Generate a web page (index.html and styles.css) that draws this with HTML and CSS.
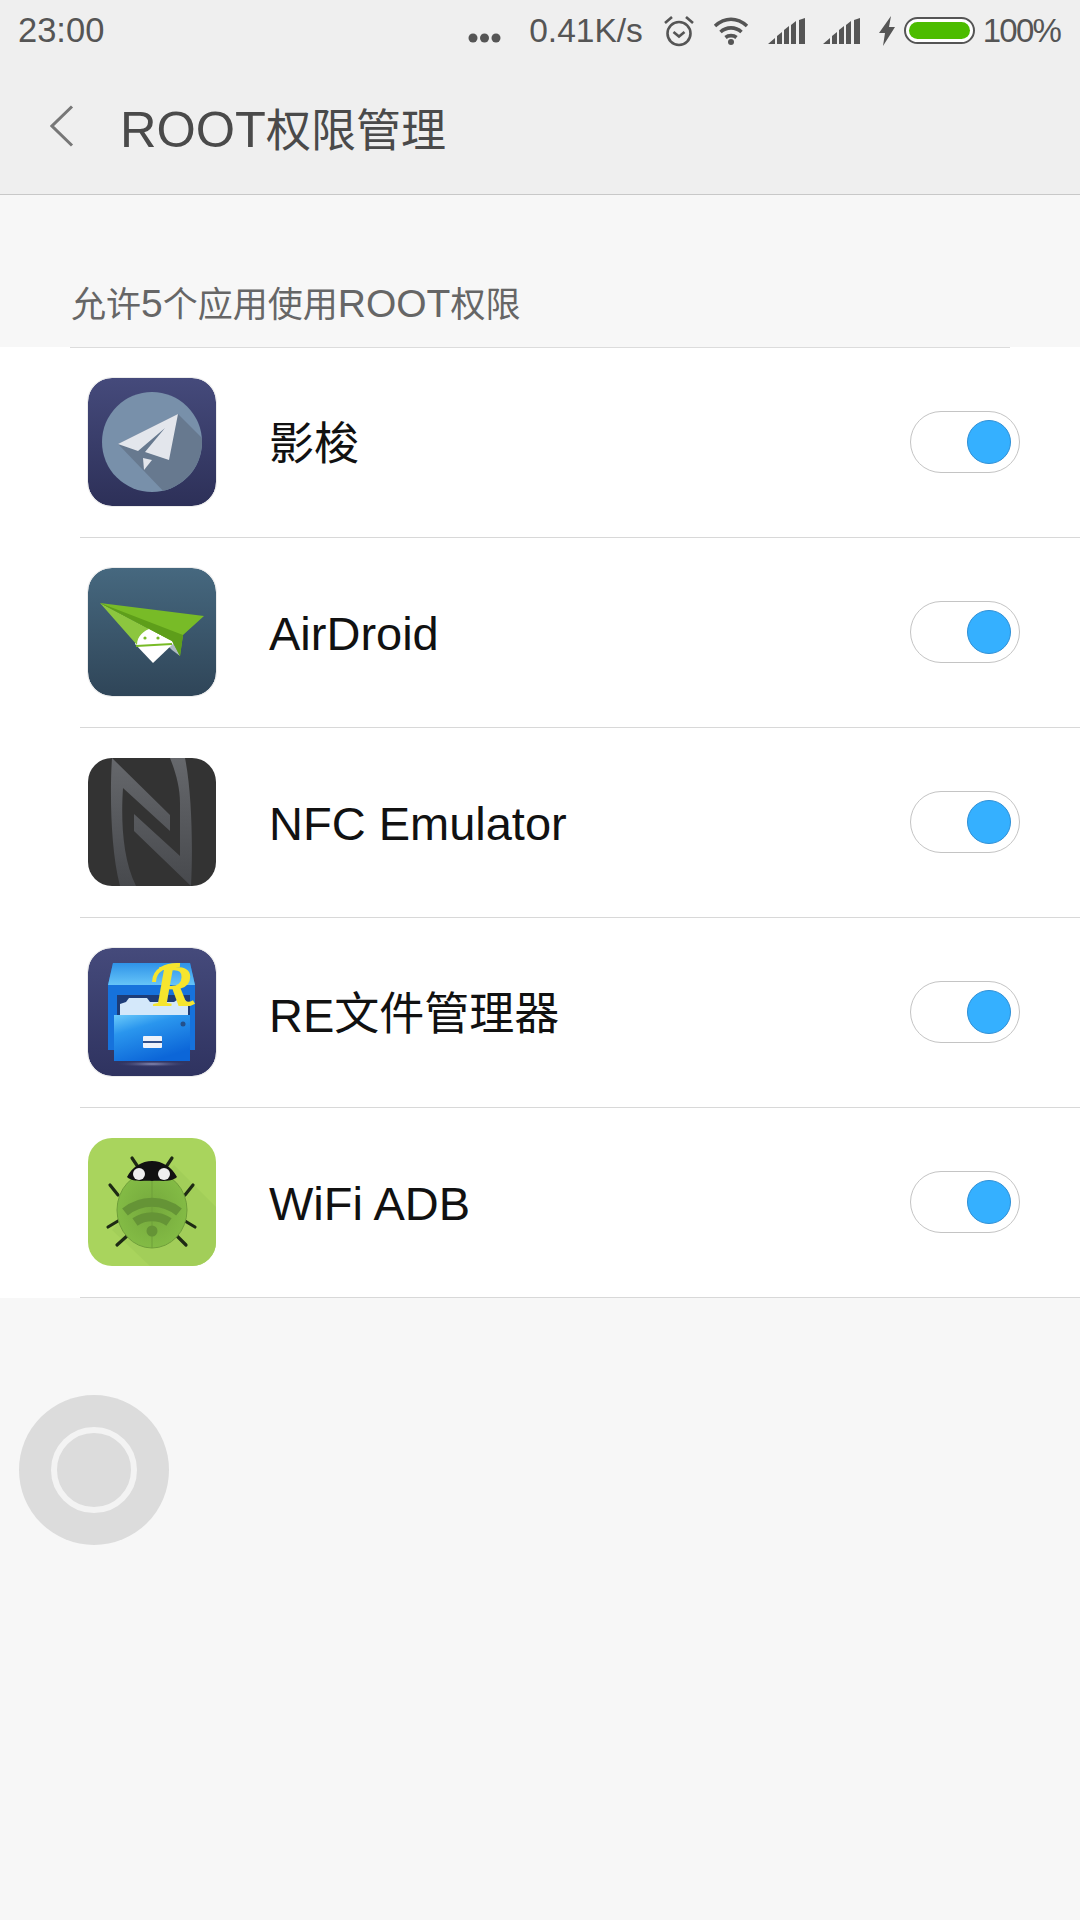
FILE: index.html
```html
<!DOCTYPE html>
<html lang="zh-CN">
<head>
    <meta charset="UTF-8">
    <meta name="viewport" content="width=device-width, initial-scale=1.0">
    <title>ROOT权限管理</title>
    <link rel="stylesheet" href="styles.css">
</head>
<body>
    <div class="top-area">
        <!-- Status bar -->
        <div class="status-bar">
            <span class="clock">23:00</span>
            <div class="status-right">
                <svg class="dots" width="33" height="10" viewBox="0 0 33 10"><circle cx="5" cy="5" r="4.5" /><circle cx="16.5" cy="5" r="4.5" /><circle cx="28" cy="5" r="4.5" /></svg>
                <span class="speed">0.41K/s</span>
                <svg class="alarm" width="32" height="32" viewBox="0 0 32 32" fill="none" stroke="#555" stroke-width="2.6"><circle cx="16" cy="18.5" r="11.5" /><path d="M10.5 17l5.500 4.500 5.500-4.500" /><path d="M2 8l7-6M30 8l-7-6" /></svg>
                <svg class="wifi" width="36" height="28" viewBox="0 0 36 28" fill="none" stroke="#555" stroke-width="3.6"><path d="M2 9c10-9 22-9 32 0" /><path d="M7.5 15c6-5.500 15-5.500 21 0" /><path d="M12.5 20.500c3-2.500 8-2.500 11 0" /><circle cx="18" cy="25" r="3" fill="#555" stroke="none" /></svg>
                <svg class="signal" width="38" height="26" viewBox="0 0 38 26" fill="#555"><path d="M0 26l7-6v6zM9 18l5-4v12h-5zM16 12l5-4v18h-5zM23 7l5-4v23h-5zM31 2l6-2v26h-6z" /></svg>
                <svg class="signal" width="38" height="26" viewBox="0 0 38 26" fill="#555"><path d="M0 26l7-6v6zM9 18l5-4v12h-5zM16 12l5-4v18h-5zM23 7l5-4v23h-5zM31 2l6-2v26h-6z" /></svg>
                <svg class="bolt" width="18" height="30" viewBox="0 0 18 30" fill="#555"><path d="M13 0L1 17h6L5 30l12-19h-6z" /></svg>
                <div class="battery"><div class="battery-fill"></div></div>
                <span class="battery-text">100%</span>
            </div>
        </div>

        <!-- Header -->
        <div class="title-bar">
            <svg class="back" width="24" height="42" viewBox="0 0 24 42" fill="none" stroke="#777" stroke-width="3"><path d="M22 1.500L2 21l20 19.500" /></svg>
            <h1>ROOT<span class="zh">权限管理</span></h1>
        </div>
    </div>

    <h2 class="section-title"><span class="zh">允许</span>5<span class="zh">个应用使用</span>ROOT<span class="zh">权限</span></h2>

    <div class="app-list">
        <div class="app-item">
            <svg class="app-icon ringed" viewBox="0 0 128 128">
                <defs>
                    <linearGradient id="shareBg" x1="0" y1="0" x2="0" y2="1"><stop offset="0" stop-color="#454a7b" /><stop offset="1" stop-color="#2d3058" /></linearGradient>
                    <clipPath id="shareClip"><circle cx="64" cy="64" r="50" /></clipPath>
                </defs>
                <rect width="128" height="128" rx="24" fill="url(#shareBg)" />
                <circle cx="64" cy="64" r="50" fill="#7890aa" />
                <path clip-path="url(#shareClip)" d="M90 36L130 76V170L30 66z" fill="#67798f" />
                <path d="M90 36L30 66l20 7 27-23-20 24 24 8z" fill="#e3e6ec" />
                <path d="M55 80l9 2-8 10z" fill="#e3e6ec" />
            </svg>
            <span class="app-name zh">影梭</span>
            <div class="toggle"><div class="knob"></div></div>
        </div>
        <div class="app-item">
            <svg class="app-icon ringed" viewBox="0 0 128 128">
                <defs>
                    <linearGradient id="airBg" x1="0" y1="0" x2="0" y2="1"><stop offset="0" stop-color="#46687f" /><stop offset="1" stop-color="#2f4558" /></linearGradient>
                </defs>
                <rect width="128" height="128" rx="24" fill="url(#airBg)" />
                <path d="M84 70l8 18-8-6-6-6z" fill="#aeb9c2" />
                <path d="M47 76l18 19 22-21-8-8-18-6-12 6z" fill="#fff" />
                <path d="M46 61l5 6M70 60l-3 6" stroke="#fff" stroke-width="2" />
                <path d="M48 78l36-2" stroke="#78bb27" stroke-width="2" />
                <circle cx="57" cy="70" r="1.6" fill="#78bb27" />
                <circle cx="70" cy="70" r="1.6" fill="#78bb27" />
                <path d="M12 35L49 77C49 68 56 62 64 60L84 73z" fill="#8cc63f" />
                <path d="M12 35L116 48 95 67 92 88 84 73z" fill="#78bb27" />
                <path d="M12 35L95 67 92 88 84 73z" fill="#5e9e1a" />
            </svg>
            <span class="app-name">AirDroid</span>
            <div class="toggle"><div class="knob"></div></div>
        </div>
        <div class="app-item">
            <svg class="app-icon" viewBox="0 0 128 128">
                <defs>
                    <linearGradient id="nfcBand" x1="0" y1="0" x2="0" y2="1"><stop offset="0" stop-color="#66686c" /><stop offset="1" stop-color="#47494d" /></linearGradient>
                </defs>
                <rect width="128" height="128" rx="24" fill="#333" />
                <path d="M24 0L82 57V73L35 30C33 60 34 100 48 128H32C22 90 22 30 24 0z" fill="url(#nfcBand)" />
                <path d="M82 0H97C104 35 105 90 103 128L46 73V56L92 98V45C92 30 88 15 82 0z" fill="url(#nfcBand)" />
            </svg>
            <span class="app-name">NFC Emulator</span>
            <div class="toggle"><div class="knob"></div></div>
        </div>
        <div class="app-item">
            <svg class="app-icon ringed" viewBox="0 0 128 128">
                <defs>
                    <linearGradient id="reBg" x1="0" y1="0" x2="0" y2="1"><stop offset="0" stop-color="#454a7b" /><stop offset="1" stop-color="#2f3360" /></linearGradient>
                    <linearGradient id="reFront" x1="0" y1="0" x2="0.5" y2="1"><stop offset="0" stop-color="#6ccbfa" /><stop offset="0.35" stop-color="#2a96ee" /><stop offset="1" stop-color="#0c66d8" /></linearGradient>
                    <linearGradient id="reTop" x1="0" y1="0" x2="0" y2="1"><stop offset="0" stop-color="#2f93e8" /><stop offset="1" stop-color="#66c4f8" /></linearGradient>
                    <radialGradient id="reGlow"><stop offset="0" stop-color="#8d90b8" /><stop offset="1" stop-color="#3a3d6c" stop-opacity="0" /></radialGradient>
                </defs>
                <rect width="128" height="128" rx="24" fill="url(#reBg)" />
                <ellipse cx="64" cy="116" rx="36" ry="3" fill="url(#reGlow)" />
                <path d="M25 15H102L107 37V102H20V37z" fill="#1672dc" />
                <path d="M25 15H102L107 37H20z" fill="url(#reTop)" />
                <rect x="29" y="47" width="73" height="20" fill="#1d3c78" />
                <path d="M32 67V56l6-2 3-4h18l3 4h24l3-2h8l3 3v12z" fill="#d4e8fa" />
                <rect x="26" y="67" width="76" height="46" fill="url(#reFront)" />
                <rect x="55" y="88" width="19" height="12" rx="1" fill="#eef2fa" />
                <rect x="55" y="93" width="19" height="2" fill="#32508a" />
                <circle cx="95" cy="76" r="2.5" fill="#24508a" />
                <text class="re-letter" x="65" y="58">R</text>
                <path d="M66 34C66 22 78 16 92 17" fill="none" stroke="#f6e52e" stroke-width="4" />
                <path d="M92 52c4 4 9 5 14 2" fill="none" stroke="#f6e52e" stroke-width="4" />
            </svg>
            <span class="app-name">RE<span class="zh">文件管理器</span></span>
            <div class="toggle"><div class="knob"></div></div>
        </div>
        <div class="app-item">
            <svg class="app-icon" viewBox="0 0 128 128">
                <defs>
                    <radialGradient id="bugBody"><stop offset="0" stop-color="#74a83c" /><stop offset="1" stop-color="#83bb45" /></radialGradient>
                    <clipPath id="bugClip"><rect width="128" height="128" rx="24" /></clipPath>
                </defs>
                <rect width="128" height="128" rx="24" fill="#a9d45d" />
                <path clip-path="url(#bugClip)" d="M86 27L130 71V130H64L24 92z" fill="#a2ce59" />
                <g stroke="#1e2a14" stroke-width="3.2" stroke-linecap="round">
                    <path d="M44 20l6 9M84 20l-6 9M22 47l8 10M105 47l-8 10M20 89l10-6M107 89l-10-6M29 107l10-9M98 107l-9-9" />
                </g>
                <ellipse cx="64" cy="72" rx="35" ry="38" fill="url(#bugBody)" stroke="#6f9f3a" stroke-width="1" />
                <path d="M39 39C44 29 54 23 64 23S84 29 89 39C82 45 72 42 64 43C56 42 46 45 39 39z" fill="#111" />
                <circle cx="51" cy="36" r="6" fill="#eee" />
                <circle cx="76" cy="36" r="6" fill="#eee" />
                <path d="M64 43v67" stroke="#6f9f3a" stroke-width="1" />
                <g fill="none" stroke="#659436" stroke-width="9">
                    <path d="M37 74c16-13 38-13 54 0" />
                    <path d="M47 84c10-7 24-7 34 0" />
                </g>
                <circle cx="64" cy="93" r="5.5" fill="#659436" />
            </svg>
            <span class="app-name">WiFi ADB</span>
            <div class="toggle"><div class="knob"></div></div>
        </div>
    </div>

    <!-- Floating ball -->
    <div class="float-ball"><div class="ball-ring"></div></div>
</body>
</html>
```

FILE: styles.css
```css
* {
    box-sizing: border-box;
}

html, body {
    margin: 0;
    padding: 0;
}

body {
    position: relative;
    width: 1080px;
    height: 1920px;
    overflow: hidden;
    background-color: #f7f7f7;
    font-family: "Liberation Sans", "Noto Sans CJK SC", sans-serif;
}

.zh {
    font-family: "Noto Sans CJK SC", sans-serif;
}

.top-area {
    height: 195px;
    background-color: #efefef;
    border-bottom: 1px solid #c8c8c8;
}

.status-bar {
    display: flex;
    justify-content: space-between;
    align-items: center;
    height: 60px;
    padding: 1px 20px 0 18px;
    color: #555;
}

.clock {
    font-size: 34.5px;
}

.status-right {
    display: flex;
    align-items: center;
}

.dots {
    fill: #555;
    margin-top: 15px;
    margin-right: 28px;
}

.speed {
    margin-right: 20px;
    font-size: 33.5px;
}

.alarm {
    margin-right: 18px;
}

.wifi {
    margin-right: 19px;
}

.signal {
    margin-right: 17px;
}

.bolt {
    margin-right: 8px;
}

.battery {
    width: 71px;
    height: 27px;
    padding: 3px;
    margin-right: 8px;
    background-color: #fff;
    border: 2px solid #555;
    border-radius: 14px;
}

.battery-fill {
    height: 100%;
    background-color: #4cbc00;
    border-radius: 9px;
}

.battery-text {
    font-size: 33px;
    letter-spacing: -1.8px;
}

.title-bar {
    display: flex;
    align-items: center;
    height: 134px;
    padding-left: 49px;
    padding-bottom: 4px;
}

.back {
    margin-top: 2px;
    margin-left: 1px;
}

.title-bar h1 {
    margin: 8px 0 0 46px;
    font-size: 50.5px;
    line-height: 56px;
    font-weight: normal;
    color: #4a4a4a;
}

.title-bar h1 .zh {
    font-size: 45px;
    line-height: 56px;
}

.section-title {
    height: 153px;
    margin: 0;
    padding: 87px 0 0 71px;
    font-size: 39px;
    line-height: 40px;
    font-weight: normal;
    color: #666;
}

.section-title .zh {
    font-size: 35px;
    line-height: 40px;
}

.app-list {
    position: relative;
    background-color: #fff;
}

.app-list::before {
    content: "";
    display: block;
    height: 1px;
    margin: -1px 70px 0;
    background-color: #dcdcdc;
}

.app-item {
    display: flex;
    align-items: center;
    height: 190px;
    margin-left: 80px;
    padding: 0 60px 1px 8px;
    border-bottom: 1px solid #d8d8d8;
}

.app-icon {
    width: 128px;
    height: 128px;
    flex-shrink: 0;
}

.ringed {
    border-radius: 24px;
    box-shadow: 0 0 0 1px #ececec;
}

.re-letter {
    font-family: "Liberation Serif", serif;
    font-style: italic;
    font-weight: bold;
    font-size: 60px;
    fill: #f6e52e;
}

.app-name {
    flex: 1;
    margin-left: 53px;
    padding-top: 4px;
    font-size: 47px;
    line-height: 50px;
    color: #111;
}

.app-name .zh {
    position: relative;
    top: -2px;
    font-size: 45px;
    line-height: 50px;
}

.app-name.zh {
    padding-top: 0;
    padding-bottom: 2px;
    font-size: 45px;
}

.toggle {
    position: relative;
    width: 110px;
    height: 62px;
    background-color: #fff;
    border: 1px solid #c4c4c4;
    border-radius: 31px;
}

.knob {
    position: absolute;
    top: 8px;
    right: 8px;
    width: 44px;
    height: 44px;
    background-color: #35b0ff;
    border: 1px solid #2e8fd6;
    border-radius: 50%;
}

.float-ball {
    position: absolute;
    left: 19px;
    top: 1395px;
    display: flex;
    align-items: center;
    justify-content: center;
    width: 150px;
    height: 150px;
    background-color: #dcdcdc;
    border-radius: 50%;
}

.ball-ring {
    width: 86px;
    height: 86px;
    border: 6px solid #f3f3f3;
    border-radius: 50%;
}
```
